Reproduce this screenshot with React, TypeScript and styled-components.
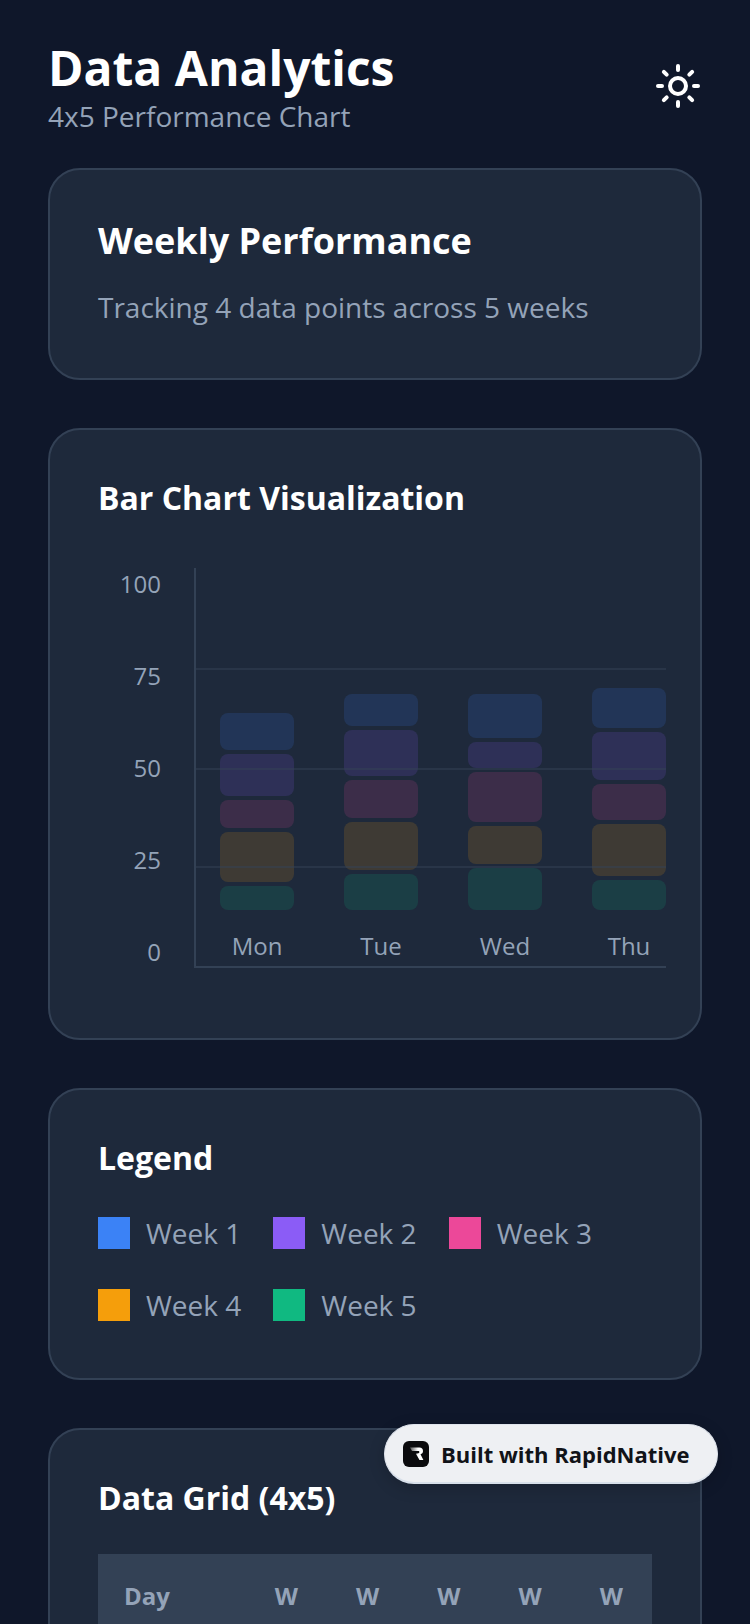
import React from "react";
import styled, { createGlobalStyle } from "styled-components";
import { Sun } from "lucide-react";

const Global = createGlobalStyle`
  html, body { margin: 0; padding: 0; background: #0f172a; overflow: hidden; }
  * { box-sizing: border-box; }
`;

const Page = styled.div`
  position: relative;
  width: 750px;
  height: 1624px;
  overflow: hidden;
  background: #0f172a;
  padding: 38px 48px 0;
  font-family: "Open Sans", "Noto Sans", sans-serif;
`;

const Header = styled.header`
  display: flex;
  justify-content: space-between;
  align-items: center;
  margin-bottom: 34px;
`;

const Title = styled.h1`
  margin: 0;
  font-size: 48px;
  line-height: 60px;
  font-weight: 700;
  color: #ffffff;
`;

const Subtitle = styled.p`
  margin: 0;
  font-size: 28px;
  line-height: 36px;
  color: #94a3b8;
`;

const Card = styled.section<{ $height: number }>`
  height: ${(p) => p.$height}px;
  background: #1e293b;
  border: 2px solid #334155;
  border-radius: 32px;
  padding: 46px 48px;
  margin-bottom: 48px;
`;

const CardHeading = styled.h2`
  margin: 0 0 22px;
  font-size: 36px;
  line-height: 50px;
  font-weight: 700;
  color: #ffffff;
`;

const CardText = styled.p`
  margin: 0;
  font-size: 28px;
  line-height: 38px;
  color: #94a3b8;
`;

const SectionTitle = styled.h3`
  margin: 0;
  font-size: 32px;
  line-height: 44px;
  font-weight: 700;
  color: #ffffff;
`;

const Chart = styled.div`
  display: flex;
  height: 400px;
  margin-top: 48px;
`;

const YAxis = styled.div`
  width: 96px;
  flex-shrink: 0;
  padding-right: 33px;
  display: flex;
  flex-direction: column;
  justify-content: space-between;
  align-items: flex-end;
`;

const AxisLabel = styled.span`
  font-size: 24px;
  line-height: 32px;
  color: #94a3b8;
`;

const Plot = styled.div`
  position: relative;
  flex: 1;
  display: flex;
  gap: 50px;
  padding: 0 0 0 24px;
  border-left: 2px solid #334155;
  border-bottom: 2px solid #334155;
`;

const GridLine = styled.div<{ $top: number }>`
  position: absolute;
  left: 0;
  right: 0;
  top: ${(p) => p.$top}px;
  height: 2px;
  background: rgba(51, 65, 85, 0.5);
  z-index: 1;
`;

const Column = styled.div`
  width: 74px;
  flex-shrink: 0;
  display: flex;
  flex-direction: column;
  justify-content: flex-end;
  align-items: center;
  gap: 4px;
`;

const Segment = styled.div<{ $color: string; $h: number }>`
  width: 100%;
  height: ${(p) => p.$h}px;
  background: ${(p) => p.$color};
  opacity: 0.15;
  border-radius: 8px;
`;

const DayLabel = styled.span`
  margin-top: 16px;
  font-size: 24px;
  line-height: 32px;
  height: 36px;
  color: #94a3b8;
  white-space: nowrap;
`;

const LegendGrid = styled.div`
  display: flex;
  flex-wrap: wrap;
  column-gap: 32px;
  row-gap: 34px;
  margin-top: 34px;
`;

const LegendItem = styled.div`
  display: flex;
  align-items: center;
  gap: 16px;
  height: 38px;
`;

const Swatch = styled.span<{ $color: string }>`
  width: 32px;
  height: 32px;
  background: ${(p) => p.$color};
`;

const LegendLabel = styled.span`
  font-size: 28px;
  line-height: 38px;
  color: #94a3b8;
`;

const GridHeader = styled.div`
  display: flex;
  margin-top: 34px;
  height: 100px;
  padding-top: 26px;
  background: #334155;
`;

const HeaderCell = styled.div<{ $first?: boolean }>`
  flex: ${(p) => (p.$first ? 1.5 : 1)};
  padding-left: ${(p) => (p.$first ? "26px" : "0")};
  text-align: ${(p) => (p.$first ? "left" : "center")};
  font-size: 24px;
  line-height: 32px;
  font-weight: 700;
  color: #94a3b8;
`;

const Badge = styled.div`
  position: absolute;
  left: 384px;
  top: 1424px;
  width: 334px;
  height: 60px;
  display: flex;
  align-items: center;
  gap: 12px;
  padding-left: 18px;
  background: #eef0f3;
  border: 1px solid #dfe4ec;
  border-bottom: 2px solid #d8e0ea;
  border-radius: 30px;
  box-shadow: 0 4px 16px rgba(0, 0, 0, 0.18);
`;

const BadgeText = styled.span`
  font-size: 22px;
  line-height: 30px;
  font-weight: 700;
  color: #111318;
  white-space: nowrap;
`;

const COLORS = ["#3b82f6", "#8b5cf6", "#ec4899", "#f59e0b", "#10b981"];

const DATA: { day: string; segs: number[] }[] = [
  { day: "Mon", segs: [37, 42, 28, 50, 24] },
  { day: "Tue", segs: [32, 46, 38, 48, 36] },
  { day: "Wed", segs: [44, 26, 50, 38, 42] },
  { day: "Thu", segs: [40, 48, 36, 52, 30] },
];

const LogoMark = () => (
  <svg width="26" height="26" viewBox="0 0 26 26" aria-hidden="true">
    <defs>
      <linearGradient id="rg" x1="0" y1="0" x2="1" y2="0">
        <stop offset="0" stopColor="#555" />
        <stop offset="0.6" stopColor="#fff" />
      </linearGradient>
    </defs>
    <rect width="26" height="26" rx="6" fill="#0b0b0d" />
    <path
      d="M7 6.5h9.5c2.2 0 3.5 1.4 3.5 3.4 0 1.7-.9 2.9-2.5 3.3l2.9 5.8h-3.9l-3.6-6.2 2.6-.6c.6-.2.9-.6.9-1.2 0-.7-.4-1.1-1.1-1.1H9z"
      fill="url(#rg)"
    />
  </svg>
);

export default function App() {
  return (
    <Page>
      <Global />
      <Header>
        <div>
          <Title>Data Analytics</Title>
          <Subtitle>4x5 Performance Chart</Subtitle>
        </div>
        <Sun size={48} color="#ffffff" strokeWidth={2} />
      </Header>

      <Card $height={212}>
        <CardHeading>Weekly Performance</CardHeading>
        <CardText>Tracking 4 data points across 5 weeks</CardText>
      </Card>

      <Card $height={612}>
        <SectionTitle>Bar Chart Visualization</SectionTitle>
        <Chart>
          <YAxis>
            {[100, 75, 50, 25, 0].map((v) => (
              <AxisLabel key={v}>{v}</AxisLabel>
            ))}
          </YAxis>
          <Plot>
            {[100, 200, 298].map((t) => (
              <GridLine key={t} $top={t} />
            ))}
            {DATA.map((d) => (
              <Column key={d.day}>
                {d.segs.map((h, i) => (
                  <Segment key={i} $color={COLORS[i]} $h={h} />
                ))}
                <DayLabel>{d.day}</DayLabel>
              </Column>
            ))}
          </Plot>
        </Chart>
      </Card>

      <Card $height={292}>
        <SectionTitle>Legend</SectionTitle>
        <LegendGrid>
          {COLORS.map((c, i) => (
            <LegendItem key={c}>
              <Swatch $color={c} />
              <LegendLabel>Week {i + 1}</LegendLabel>
            </LegendItem>
          ))}
        </LegendGrid>
      </Card>

      <Card $height={400}>
        <SectionTitle>Data Grid (4x5)</SectionTitle>
        <GridHeader>
          <HeaderCell $first>Day</HeaderCell>
          {[0, 1, 2, 3, 4].map((i) => (
            <HeaderCell key={i}>W</HeaderCell>
          ))}
        </GridHeader>
      </Card>

      <Badge>
        <LogoMark />
        <BadgeText>Built with RapidNative</BadgeText>
      </Badge>
    </Page>
  );
}
